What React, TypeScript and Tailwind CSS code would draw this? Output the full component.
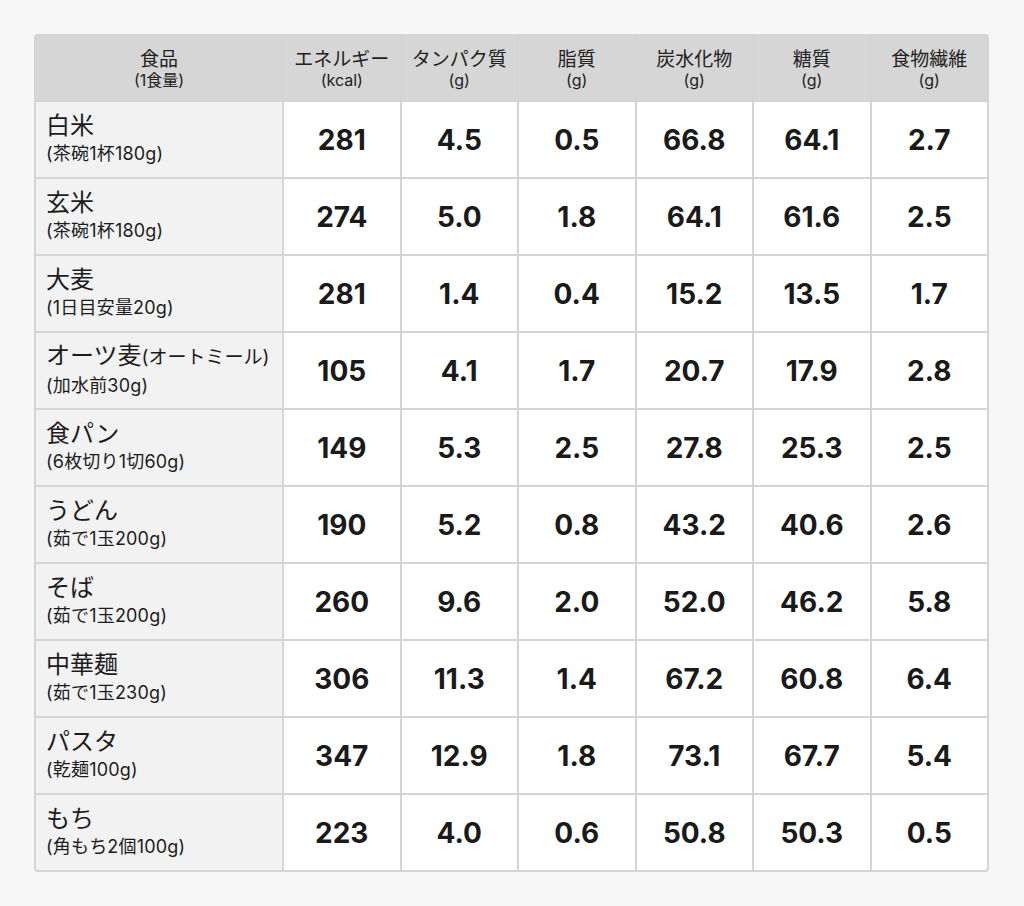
const headers = [
  { label: "食品", unit: "(1食量)" },
  { label: "エネルギー", unit: "(kcal)" },
  { label: "タンパク質", unit: "(g)" },
  { label: "脂質", unit: "(g)" },
  { label: "炭水化物", unit: "(g)" },
  { label: "糖質", unit: "(g)" },
  { label: "食物繊維", unit: "(g)" },
];

const rows = [
  { name: "白米", note: "(茶碗1杯180g)", values: ["281", "4.5", "0.5", "66.8", "64.1", "2.7"] },
  { name: "玄米", note: "(茶碗1杯180g)", values: ["274", "5.0", "1.8", "64.1", "61.6", "2.5"] },
  { name: "大麦", note: "(1日目安量20g)", values: ["281", "1.4", "0.4", "15.2", "13.5", "1.7"] },
  { name: "オーツ麦", extra: "(オートミール)", note: "(加水前30g)", values: ["105", "4.1", "1.7", "20.7", "17.9", "2.8"] },
  { name: "食パン", note: "(6枚切り1切60g)", values: ["149", "5.3", "2.5", "27.8", "25.3", "2.5"] },
  { name: "うどん", note: "(茹で1玉200g)", values: ["190", "5.2", "0.8", "43.2", "40.6", "2.6"] },
  { name: "そば", note: "(茹で1玉200g)", values: ["260", "9.6", "2.0", "52.0", "46.2", "5.8"] },
  { name: "中華麺", note: "(茹で1玉230g)", values: ["306", "11.3", "1.4", "67.2", "60.8", "6.4"] },
  { name: "パスタ", note: "(乾麺100g)", values: ["347", "12.9", "1.8", "73.1", "67.7", "5.4"] },
  { name: "もち", note: "(角もち2個100g)", values: ["223", "4.0", "0.6", "50.8", "50.3", "0.5"] },
];

export default function App() {
  return (
    <div className="min-h-screen bg-[#f7f7f7] p-[34px] text-[#1c1c1c] [font-family:Inter,'Noto_Sans_CJK_JP',sans-serif]">
      <div className="w-[955px] overflow-hidden rounded-[4px] border-2 border-[#d4d4d4] bg-[#d4d4d4]">
        <div className="grid grid-cols-[246px_repeat(6,1fr)] grid-rows-[64px_repeat(10,75px)] gap-[2px]">
          {headers.map((h) => (
            <div
              key={h.label}
              className="flex flex-col items-center justify-center bg-[#d6d6d6] pt-[1px] text-[#222]"
            >
              <span className="text-[19px] leading-[23px]">{h.label}</span>
              <span className="text-[16px] leading-[19px]">{h.unit}</span>
            </div>
          ))}
          {rows.map((r) => (
            <div key={r.name} className="contents">
              <div className="flex flex-col justify-center bg-[#f2f2f2] px-[10px] pb-[2px]">
                <span className="text-[24px] leading-[30px]">
                  {r.name}
                  {r.extra && <span className="text-[19px]">{r.extra}</span>}
                </span>
                <span className="text-[18px] leading-[25px] tracking-[0.2px]">{r.note}</span>
              </div>
              {r.values.map((v, i) => (
                <div
                  key={i}
                  className="flex items-center justify-center bg-white text-[28px] font-bold text-[#1a1a1a]"
                >
                  {v}
                </div>
              ))}
            </div>
          ))}
        </div>
      </div>
    </div>
  );
}
